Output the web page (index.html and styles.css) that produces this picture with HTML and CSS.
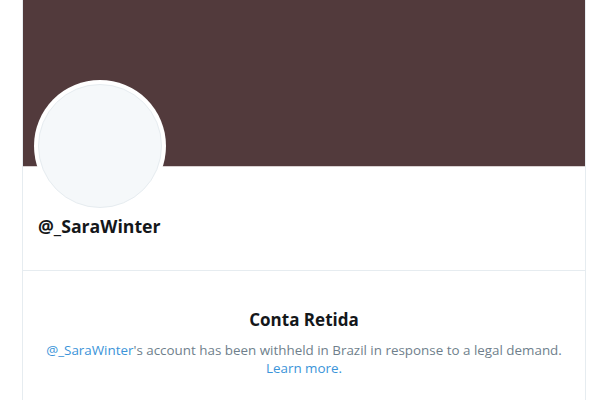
FILE: index.html
```html
<!DOCTYPE html>
<html>
<head>
<meta charset="utf-8">
<link rel="stylesheet" href="styles.css">
</head>
<body>
<div class="card">
  <div class="banner"></div>
  <div class="profile">
    <div class="avatar"><div class="avatar-inner"></div></div>
    <div class="handle">@_SaraWinter</div>
  </div>
  <div class="withheld">
    <div class="title">Conta Retida</div>
    <p class="msg"><span class="link">@_SaraWinter</span>'s account has been withheld in Brazil in response to a legal demand.<br><span class="link">Learn more.</span></p>
  </div>
</div>
</body>
</html>
```
FILE: styles.css
```css
html, body { margin: 0; padding: 0; background: #fff; }
body { font-family: "Open Sans", "Noto Sans", sans-serif; width: 600px; height: 400px; overflow: hidden; }
.card {
  margin-left: 22px;
  width: 562px;
  border-left: 1px solid #e6ecf0;
  border-right: 1px solid #e6ecf0;
  height: 400px;
}
.banner { height: 166px; background: #523a3c; border-bottom: 1px solid #d8d0d0; }
.profile { position: relative; padding: 47px 0 0 15px; height: 56px; border-bottom: 1px solid #e6ecf0; }
.avatar {
  position: absolute; left: 11px; top: -87px;
  width: 132px; height: 132px; border-radius: 50%;
  background: #fff; box-sizing: border-box; padding: 4px;
}
.avatar-inner { width: 100%; height: 100%; border-radius: 50%; background: #f5f8fa; border: 1px solid #e6ecf0; box-sizing: border-box; }
.handle { font-weight: 700; font-size: 17.7px; color: #14171a; line-height: 24px; }
.withheld { text-align: center; padding-top: 37px; }
.title { font-weight: 700; font-size: 17px; color: #14171a; line-height: 24px; }
.msg { margin: 9px 0 0; font-size: 13.4px; line-height: 18px; color: #6f7f8c; }
.link { color: #3b94d9; }
```
